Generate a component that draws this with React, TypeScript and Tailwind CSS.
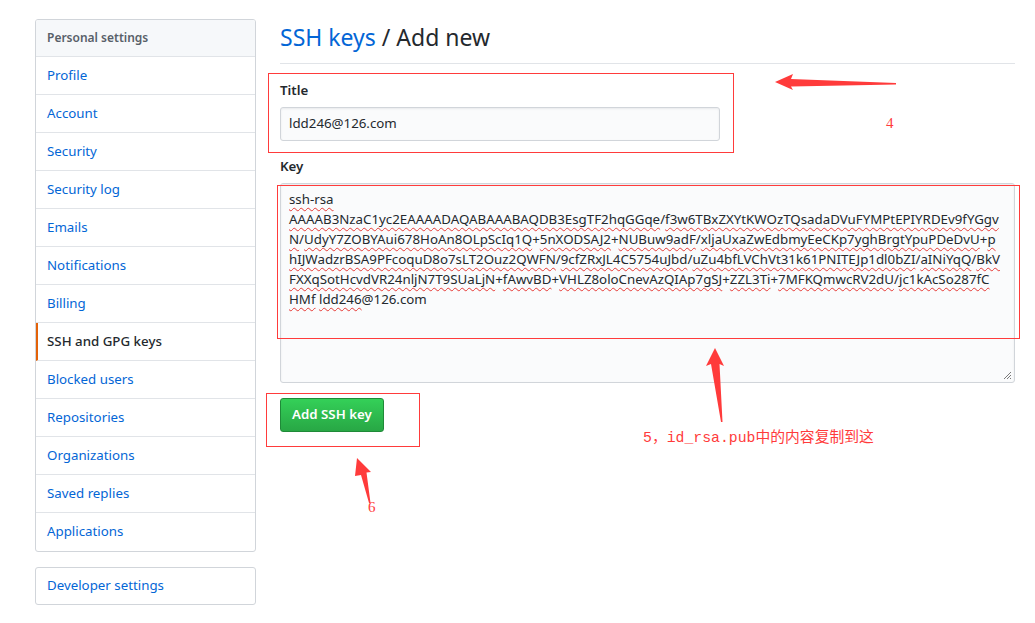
import type { ReactNode } from "react";

const menu = [
  "Profile",
  "Account",
  "Security",
  "Security log",
  "Emails",
  "Notifications",
  "Billing",
  "SSH and GPG keys",
  "Blocked users",
  "Repositories",
  "Organizations",
  "Saved replies",
  "Applications",
];

const keyLines = [
  "ssh-rsa",
  "AAAAB3NzaC1yc2EAAAADAQABAAABAQDB3EsgTF2hqGGqe/f3w6TBxZXYtKWOzTQsadaDVuFYMPtEPIYRDEv9fYGgv",
  "N/UdyY7ZOBYAui678HoAn8OLpScIq1Q+5nXODSAJ2+NUBuw9adF/xljaUxaZwEdbmyEeCKp7yghBrgtYpuPDeDvU+p",
  "hIJWadzrBSA9PFcoquD8o7sLT2Ouz2QWFN/9cfZRxJL4C5754uJbd/uZu4bfLVChVt31k61PNITEJp1dl0bZI/aINiYqQ/BkV",
  "FXXqSotHcvdVR24nljN7T9SUaLjN+fAwvBD+VHLZ8oloCnevAzQIAp7gSJ+ZZL3Ti+7MFKQmwcRV2dU/jc1kAcSo287fC",
  "HMf ldd246@126.com",
];

const font = "font-['Segoe_UI','Noto_Sans',sans-serif]";

// spell-check squiggles under each word, like the browser draws in a textarea
function Squiggly({ line }: { line: string }) {
  const parts = line.split(/([+/ ]|@126\.com)/).filter(Boolean);
  return (
    <div className="h-[20px] whitespace-nowrap">
      {parts.map((p, i) =>
        /^([+/ ]|@126\.com)$/.test(p) ? (
          <span key={i}>{p}</span>
        ) : (
          <span
            key={i}
            className="underline decoration-wavy decoration-[#e53935] decoration-1 underline-offset-[3px]"
          >
            {p}
          </span>
        )
      )}
    </div>
  );
}

function Label({ children }: { children: ReactNode }) {
  return <div className="mb-[6px] text-[13.3px] leading-[21px] font-semibold text-[#24292e]">{children}</div>;
}

export default function App() {
  return (
    <div className={`relative h-[623px] w-[1035px] overflow-hidden bg-white ${font}`}>
      <div className="flex gap-[24px] pl-[35px] pr-[20px] pt-[19px]">
        {/* settings menu */}
        <aside className="w-[221px] shrink-0">
          <nav className="overflow-hidden rounded-[3px] border border-[#d1d5da]">
            <div className="flex h-[37px] items-center border-b border-[#e1e4e8] bg-[#f6f8fa] px-[11px] text-[12px] font-semibold text-[#586069]">
              Personal settings
            </div>
            {menu.map((item, i) => {
              const active = item === "SSH and GPG keys";
              return (
                <div
                  key={item}
                  className={`flex h-[38px] items-center px-[11px] text-[13.3px] ${
                    i < menu.length - 1 ? "border-b border-[#e1e4e8]" : ""
                  } ${
                    active
                      ? "border-l-2 border-l-[#e36209] pl-[9px] font-medium text-[#24292e]"
                      : "text-[#0366d6]"
                  }`}
                >
                  {item}
                </div>
              );
            })}
          </nav>
          <div className="mt-[15px] flex h-[38px] items-center rounded-[3px] border border-[#d1d5da] px-[11px] text-[13.3px] text-[#0366d6]">
            Developer settings
          </div>
        </aside>

        {/* add key form */}
        <main className="min-w-0 flex-1">
          <div className="mb-[16px] border-b border-[#e1e4e8] pb-[8px]">
            <h2 className="text-[23px] leading-[36px] font-normal text-[#24292e]">
              <span className="text-[#0366d6]">SSH keys</span> / Add new
            </h2>
          </div>

          <div>
            <Label>Title</Label>
            <div className="flex h-[34px] w-[440px] items-center rounded-[3px] border border-[#d1d5da] bg-[#fafbfc] px-[8px] text-[13.3px] text-[#24292e] shadow-[inset_0_1px_2px_rgba(27,31,35,0.075)]">
              ldd246@126.com
            </div>
          </div>

          <div className="mt-[15px]">
            <Label>Key</Label>
            <div className="relative h-[200px] overflow-hidden rounded-[3px] border border-[#d1d5da] bg-[#fafbfc] px-[8px] pt-[5px] text-[13.3px] leading-[20px] text-[#24292e] shadow-[inset_0_1px_2px_rgba(27,31,35,0.075)]">
              {keyLines.map((l) => (
                <Squiggly key={l} line={l} />
              ))}
              <svg className="absolute bottom-[2px] right-[2px]" width="9" height="9" viewBox="0 0 9 9">
                <path d="M1 8 L8 1 M4 8 L8 4 M7 8 L8 7" stroke="#7a7a7a" strokeWidth="1" />
              </svg>
            </div>
          </div>

          <button className="mt-[15px] h-[34px] rounded-[3px] border border-[#1f8a38] bg-gradient-to-b from-[#34d058] to-[#28a745] px-[11px] text-[13.3px] font-semibold text-white">
            Add SSH key
          </button>
        </main>
      </div>

      {/* red annotation boxes */}
      <div className="pointer-events-none absolute left-[268px] top-[73px] h-[80px] w-[466px] border border-[#ff3b3b]" />
      <div className="pointer-events-none absolute left-[277px] top-[185px] h-[154px] w-[743px] border border-[#ff3b3b]" />
      <div className="pointer-events-none absolute left-[266px] top-[393px] h-[54px] w-[154px] border border-[#ff3b3b]" />

      {/* annotation arrows */}
      <svg className="pointer-events-none absolute left-0 top-0" width="1035" height="623">
        <polygon points="775,82 793,74 791,79 896,83 896,84.5 791,86.5 793,90" fill="#ff3b3b" />
        <polygon points="715,348 724,366 719.5,364 722.5,422 721,422 711,364 706,366" fill="#ff3b3b" />
        <polygon points="357,458 371,472 366.5,472.5 370.5,503 369,503 361,475 355,476" fill="#ff3b3b" />
      </svg>

      <span className="absolute left-[886px] top-[113px] font-['Liberation_Serif',serif] text-[15px] leading-[20px] text-[#ff3b3b]">
        4
      </span>
      <span className="absolute left-[368px] top-[497px] font-['Liberation_Serif',serif] text-[15px] leading-[20px] text-[#ff3b3b]">
        6
      </span>
      <span className="absolute left-[643px] top-[428px] whitespace-nowrap font-['Liberation_Mono','Noto_Sans_CJK_SC',monospace] text-[14.8px] leading-[20px] text-[#ff3b3b]">
        5，id_rsa.pub中的内容复制到这
      </span>
    </div>
  );
}
